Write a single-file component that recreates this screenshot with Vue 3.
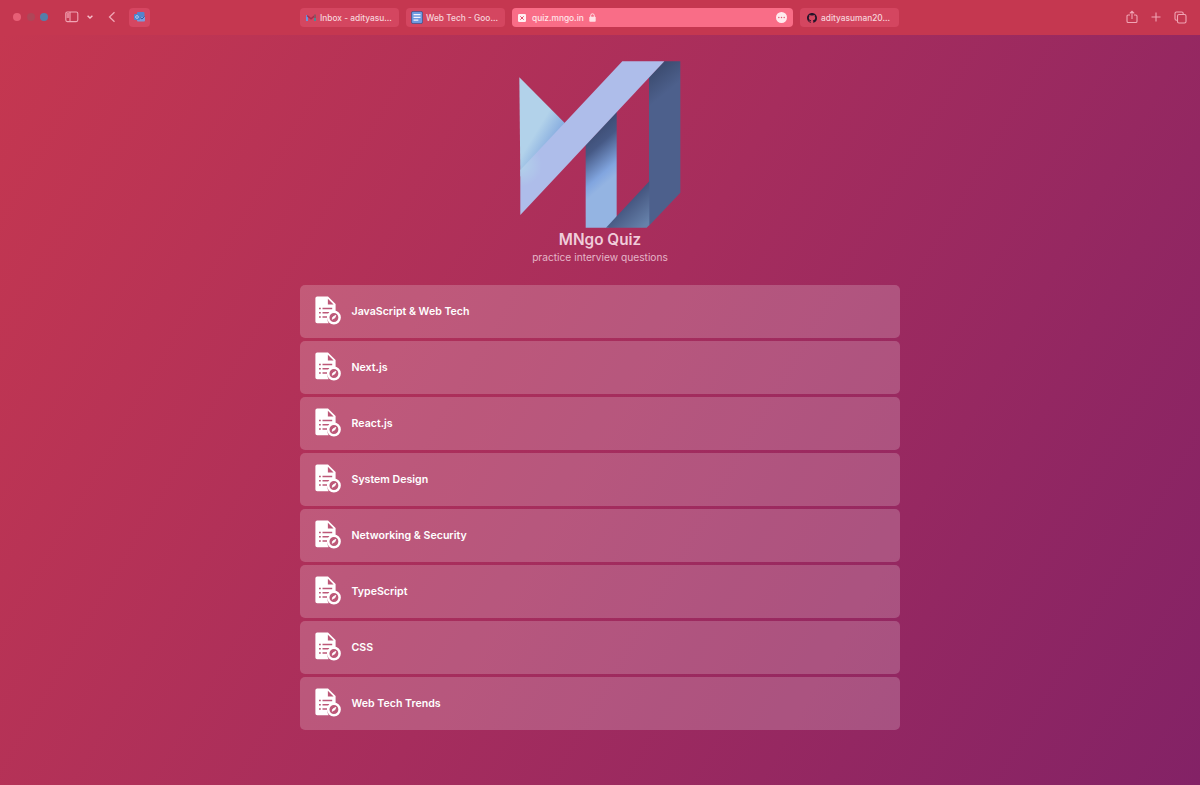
<script setup>
const topics = ['JavaScript & Web Tech', 'Next.js', 'React.js', 'System Design', 'Networking & Security', 'TypeScript', 'CSS', 'Web Tech Trends']
</script>

<template>
  <div class="window">
    <header class="toolbar">
      <div class="left">
        <i class="dot red"></i><i class="dot grey"></i><i class="dot blue"></i>
        <svg class="sidebar" width="14" height="12" viewBox="0 0 14 12" fill="none" stroke="#f1a5b4" stroke-width="1.1">
          <rect x=".8" y="1" width="12" height="9.6" rx="1.5" /><path d="M5 1v9.600" /><path d="M1.500 2H4.500V7H1.500Z" fill="#e77e93" stroke="none" />
        </svg>
        <svg class="chev" width="8" height="6" viewBox="0 0 8 6" fill="none" stroke="#f6c0cb" stroke-width="1.4"><path d="M1.600 1.700 4 4l2.400-2.300" /></svg>
        <svg class="back" width="8" height="12" viewBox="0 0 8 12" fill="none" stroke="#f1a5b4" stroke-width="1.3"><path d="M6.500 1.200 1.500 6l5 4.800" /></svg>
        <span class="pin">
          <svg width="12" height="10" viewBox="0 0 12 10"><rect x="3" y="0" width="7.500" height="6" rx="1" fill="#5584cb" /><path d="M3 5h8v3.500q0 1-1 1H4q-1 0-1-1z" fill="#7b9bdd" /><path d="m6 5.500 2 1.500 2.500-2.500" stroke="#345b9d" fill="none" /><rect y="2" width="6" height="6" rx="1" fill="#4a86cf" /><circle cx="3" cy="5" r="1.400" fill="none" stroke="#c7d6f0" stroke-width=".8" /></svg>
        </span>
      </div>
      <div class="tabs">
        <div class="tab">
          <svg class="fav gmail" width="10" height="8" viewBox="0 0 10 8"><path d="M0 1h2v6H0z" fill="#6b93dd" /><path d="m1 1.500 4 3.300 4-3.300" stroke="#a82c4c" stroke-width="1.600" fill="none" /><path d="M8 .5h2V4H8z" fill="#8e5361" /><path d="M8 4h2v3H8z" fill="#4c8a94" /></svg>
          <span>Inbox - adityasu...</span>
        </div>
        <div class="tab docs">
          <svg class="fav" width="12" height="13" viewBox="0 0 12 13"><rect x=".4" y=".4" width="11.200" height="12.200" rx="1.700" fill="#6d9ae0" stroke="#454e82" stroke-width=".8" /><path d="M2.500 3.700h7M2.500 6.400h7M2.500 9.100h4.800" stroke="#f3f2fb" stroke-width="1.200" /></svg>
          <span>Web Tech - Goo...</span>
        </div>
        <div class="tab active">
          <svg class="close" width="8" height="8" viewBox="0 0 8 8"><rect width="8" height="8" rx="1.200" fill="#fff0f2" /><path d="m2.300 2.300 3.400 3.400m0-3.400L2.300 5.700" stroke="#e34f6c" /></svg>
          <span>quiz.mngo.in</span>
          <svg class="lock" width="7" height="9" viewBox="0 0 7 9"><path d="M1.700 4V2.600a1.800 1.800 0 0 1 3.600 0V4" fill="none" stroke="#ffe1e6" /><rect x=".3" y="3.800" width="6.400" height="5" rx=".8" fill="#ffe1e6" /></svg>
          <svg class="more" width="11" height="11" viewBox="0 0 11 11"><circle cx="5.500" cy="5.500" r="5.500" fill="#ffebee" /><g fill="#e35b75"><circle cx="2.800" cy="5.500" r=".75" /><circle cx="5.500" cy="5.500" r=".75" /><circle cx="8.200" cy="5.500" r=".75" /></g></svg>
        </div>
        <div class="tab github">
          <svg class="fav" width="10" height="10" viewBox="0 0 16 16" fill="#241429"><path d="M8 0C3.58 0 0 3.58 0 8c0 3.54 2.29 6.53 5.47 7.59.4.07.55-.17.55-.38v-1.49c-2.01.37-2.53-.49-2.69-.94-.09-.23-.48-.94-.82-1.13-.28-.15-.68-.52-.01-.53.63-.01 1.08.58 1.23.82.72 1.21 1.87.87 2.33.66.07-.52.28-.87.51-1.07-1.78-.2-3.64-.89-3.64-3.95 0-.87.31-1.59.82-2.15-.08-.2-.36-1.02.08-2.12 0 0 .67-.21 2.2.82a7.4 7.4 0 0 1 4 0c1.53-1.04 2.2-.82 2.2-.82.44 1.1.16 1.92.08 2.12.51.56.82 1.27.82 2.15 0 3.07-1.87 3.75-3.65 3.95.29.25.54.73.54 1.48v2.2c0 .21.15.46.55.38A8 8 0 0 0 16 8c0-4.42-3.58-8-8-8z" /></svg>
          <span>adityasuman20...</span>
        </div>
      </div>
      <div class="right">
        <svg width="12" height="14" viewBox="0 0 12 14"><path d="M4 5H2.200Q1 5 1 6.200v5Q1 12.500 2.200 12.500h7.600q1.200 0 1.200-1.300v-5Q11 5 9.800 5H8M6 9V1.200M3.800 3.400 6 1.200l2.200 2.200" /></svg>
        <svg width="10" height="10" viewBox="0 0 10 10"><path d="M5 .5v9M.5 5h9" /></svg>
        <svg width="13" height="13" viewBox="0 0 13 13"><rect x="3.500" y="3.500" width="8.500" height="8.500" rx="1.500" /><path d="M3.500 9.200h-1Q1 9.200 1 7.800V2.400Q1 1 2.400 1h5.400q1.400 0 1.400 1.500v1" /></svg>
      </div>
    </header>
    <main class="page">
      <svg class="logo" width="162" height="167" viewBox="42 33 486 501">
        <defs>
          <linearGradient id="wing" gradientUnits="userSpaceOnUse" x1="115" y1="210" x2="180" y2="250"><stop stop-color="#b2d2ea" /><stop offset="1" stop-color="#7ba2dc" /></linearGradient>
          <radialGradient id="strip" gradientUnits="userSpaceOnUse" cx="46" cy="345" r="65"><stop stop-color="#b2d2ea" /><stop offset="1" stop-color="#aebdea" /></radialGradient>
          <linearGradient id="stem" gradientUnits="userSpaceOnUse" x1="255" y1="250" x2="350" y2="360"><stop stop-color="#3d4c73" /><stop offset=".3" stop-color="#465985" /><stop offset=".8" stop-color="#81a5df" /><stop offset="1" stop-color="#94b4e2" /></linearGradient>
          <linearGradient id="fold" gradientUnits="userSpaceOnUse" x1="365" y1="445" x2="430" y2="515"><stop stop-color="#40507a" /><stop offset="1" stop-color="#6681aa" /></linearGradient>
          <linearGradient id="side" gradientUnits="userSpaceOnUse" x1="455" y1="60" x2="500" y2="115"><stop stop-color="#3d4d72" /><stop offset="1" stop-color="#4d608c" /></linearGradient>
        </defs>
        <path d="M43 82 180 220 46 380Z" fill="url(#wing)" />
        <path d="M242 285 335 185V500L310 533H242Z" fill="url(#stem)" />
        <path d="M432 82 478 34H526V428L432 527Z" fill="url(#side)" />
        <path d="M303 533 433 394V525L425 533Z" fill="url(#fold)" />
        <path d="M352 34H478L46 495V360Z" fill="url(#strip)" />
      </svg>
      <h1>MNgo Quiz</h1>
      <p>practice interview questions</p>
      <ul class="list">
        <li v-for="topic in topics" :key="topic">
          <svg width="27" height="29" viewBox="0 0 27 29">
            <path d="M2.200.4H13L20.600 8v8.200a7 7 0 0 0-8.200 6.900q0 2.800 1.200 4.100H2.200Q.4 27.200.4 25.400V2.200Q.4.400 2.200.4Z" fill="#fff" />
            <path d="M12.900 2.800v5.700h5.700" fill="#bd5878" />
            <path d="M7.500 12.600h9.700M7.500 16.800h7M7.500 21h4.500M4 12.600h1.800M4 16.800h1.800M4 21h1.800" stroke="#bd5878" stroke-width="1.500" />
            <circle cx="18.900" cy="21.500" r="5.700" fill="#bd5878" stroke="#fff" stroke-width="2.500" />
            <path d="m17.200 23.300.6-2.200 3-1.800-.9 2.500z" fill="#fff" stroke="#fff" stroke-width=".8" />
          </svg>
          <span>{{ topic }}</span>
        </li>
      </ul>
    </main>
  </div>
</template>

<style>
body { margin: 0; }
</style>

<style scoped>
.window { height: 785px; overflow: hidden; display: flex; flex-direction: column; font-family: Inter, "Liberation Sans", sans-serif; }
.toolbar { height: 35px; flex: none; display: grid; grid-template-columns: 300px 599px 301px; background: #c53750; box-sizing: border-box; align-items: start; }
.left, .right { height: 34px; display: flex; align-items: center; box-sizing: border-box; }
.left { padding-left: 13px; }
.dot { width: 8px; height: 8px; border-radius: 50%; margin-right: 5.500px; }
.red { background: #e75f76; }
.grey { background: #af4658; }
.blue { background: #557fa9; }
.sidebar { margin-left: 11px; }
.chev { margin-left: 7px; }
.back { margin-left: 14.500px; }
.pin { width: 21px; height: 19px; margin-left: 13px; border-radius: 4px; background: #d54661; display: flex; align-items: center; justify-content: center; }
.tabs { display: grid; grid-template-columns: 99px 99px 281px 99px; gap: 7px; padding-top: 8px; }
.tab { height: 19px; border-radius: 4px; background: #d44660; color: #f7d4db; display: flex; align-items: center; box-sizing: border-box; font-size: 8.350px; font-weight: 500; white-space: nowrap; }
.gmail { margin: 0 4px 0 6px; }
.docs .fav { margin: 0 3px 0 5px; }
.github .fav { margin: 0 4px 0 7px; }
.active { background: #f96d87; color: #ffe6ea; }
.close { margin: 0 6px; }
.lock { margin-left: 5px; }
.more { margin: 0 6px 0 auto; }
.right { padding-left: 226.500px; }
.right svg { fill: none; stroke: #f1a5b4; stroke-width: 1.100; margin-right: 13px; }
.page { flex: 1; background: linear-gradient(120deg, #c53750 0%, #a62d5d 50%, #832266 100%); display: flex; flex-direction: column; align-items: center; padding-top: 26px; }
.logo { flex: none; }
h1 { margin: 1px 0 0; height: 21px; line-height: 21px; font-size: 15.300px; font-weight: 600; color: #f0ccda; }
p { margin: 0; height: 15px; line-height: 15px; font-size: 10.200px; color: #e5b5c8; }
.list { list-style: none; margin: 19.500px 0 0; padding: 0; width: 600px; display: grid; gap: 2.500px; }
li { height: 53.500px; box-sizing: border-box; border-radius: 5px; background: rgba(255, 255, 255, .2); display: flex; align-items: center; padding: 0 0 0 15px; color: #fff; font-size: 10.600px; font-weight: 600; }
li svg { margin-bottom: 1px; }
li span { margin-left: 9.500px; }
</style>
